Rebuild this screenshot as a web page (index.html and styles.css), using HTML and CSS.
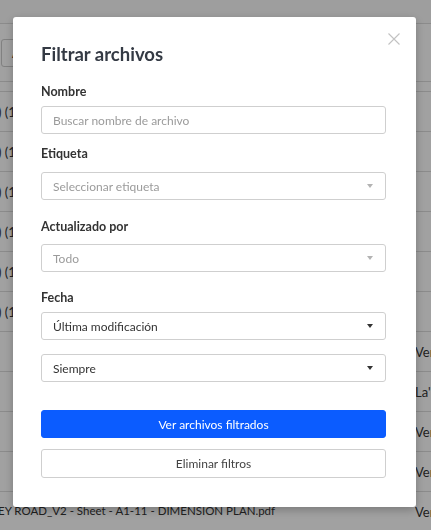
FILE: index.html
```html
<!DOCTYPE html>
<html lang="es">
<head>
<meta charset="utf-8">
<title>Filtrar archivos</title>
<link rel="stylesheet" href="styles.css">
</head>
<body>
<div class="page">
  <div class="topbar"></div>
  <div class="toolbar"><button class="tool-btn">A</button></div>
  <div class="thead"></div>
  <div class="row"><span class="name">) (1).pdf</span></div>
  <div class="row"><span class="name">) (1).pdf</span></div>
  <div class="row"><span class="name">) (1).pdf</span></div>
  <div class="row"><span class="name">) (1).pdf</span></div>
  <div class="row"><span class="name">) (1).pdf</span></div>
  <div class="row"><span class="name">) (1).pdf</span></div>
  <div class="row"><span class="name"></span><span class="who">Ver</span></div>
  <div class="row"><span class="name"></span><span class="who">La'D</span></div>
  <div class="row"><span class="name"></span><span class="who">Ver</span></div>
  <div class="row"><span class="name"></span><span class="who">Ver</span></div>
  <div class="row"><span class="name last">EY ROAD_V2 - Sheet - A1-11 - DIMENSION PLAN.pdf</span><span class="who">Ver</span></div>
</div>

<div class="overlay">
  <div class="modal">
    <button class="close" aria-label="Cerrar">
      <svg width="12" height="12" viewBox="0 0 12 12"><path d="M0.5 0.5L11.5 11.5M11.5 0.5L0.5 11.5" stroke="#c2c2c2" stroke-width="1.1" fill="none"/></svg>
    </button>
    <h2 class="title">Filtrar archivos</h2>

    <div class="field f1">
      <label class="label">Nombre</label>
      <div class="control placeholder">Buscar nombre de archivo</div>
    </div>

    <div class="field f2">
      <label class="label">Etiqueta</label>
      <div class="control placeholder select">Seleccionar etiqueta<span class="caret light"></span></div>
    </div>

    <div class="field f3">
      <label class="label">Actualizado por</label>
      <div class="control placeholder select">Todo<span class="caret light"></span></div>
    </div>

    <div class="field f4">
      <label class="label">Fecha</label>
      <div class="control select">Última modificación<span class="caret"></span></div>
      <div class="control select second">Siempre<span class="caret"></span></div>
    </div>

    <div class="actions">
      <button class="btn primary">Ver archivos filtrados</button>
      <button class="btn secondary">Eliminar filtros</button>
    </div>
  </div>
</div>
</body>
</html>
```

FILE: styles.css
```css
* { box-sizing: border-box; }
html, body { margin: 0; padding: 0; }
body {
  width: 431px;
  height: 530px;
  overflow: hidden;
  background: #ffffff;
  font-family: Lato, "Noto Sans", "Liberation Sans", sans-serif;
  color: #333;
}

.page { width: 431px; }
.topbar { height: 24px; background: #fbfbfb; border-bottom: 1px solid #dcdcdc; }
.toolbar { height: 58px; display: flex; align-items: center; border-bottom: 1px solid #dcdcdc; }
.tool-btn {
  margin: 0 0 0 1px;
  width: 60px; height: 28px;
  background: #fff;
  border: 1px solid #ccc;
  border-radius: 3px;
  font: 13px Lato, sans-serif;
  color: #333;
  text-align: left;
  padding-left: 10px;
}
.thead { height: 10px; border-bottom: 1px solid #dcdcdc; }
.row {
  height: 40px;
  border-bottom: 1px solid #dcdcdc;
  display: flex;
  align-items: center;
  justify-content: space-between;
  font-size: 13px;
  color: #333;
  white-space: nowrap;
}
.name { margin-left: -2px; color: #333; }
.name.last { font-size: 11.5px; margin-top: -3px; }
.who { width: 16px; overflow: hidden; color: #333; }

.overlay {
  position: fixed;
  inset: 0;
  background: rgba(0, 0, 0, 0.37);
  padding: 17px 0 0 13px;
}
.modal {
  position: relative;
  width: 403px;
  height: 490px;
  background: #fff;
  border-radius: 3px;
  box-shadow: 0 3px 10px rgba(0, 0, 0, 0.25);
  padding: 25px 30px 30px 28px;
}
.close {
  position: absolute;
  top: 16px; right: 16px;
  width: 12px; height: 12px;
  padding: 0; border: 0; background: none;
  display: block;
}
.close svg { display: block; }

.title {
  margin: 0 0 18px;
  font-size: 18.5px;
  line-height: 24px;
  font-weight: 700;
  color: #343a44;
}
.field { display: flex; flex-direction: column; }
.label {
  display: block;
  font-size: 12.5px;
  line-height: 16px;
  font-weight: 700;
  color: #333;
}
.f1 .label { margin-bottom: 6px; }
.f2 { margin-top: 12px; }
.f2 .label { margin-bottom: 10px; }
.f3 { margin-top: 19px; }
.f3 .label { margin-bottom: 9px; }
.f4 { margin-top: 18px; }
.f4 .label { margin-bottom: 6px; }

.control {
  height: 28px;
  border: 1px solid #cfcfcf;
  border-radius: 3px;
  display: flex;
  align-items: center;
  padding: 0 11px;
  font-size: 12px;
  color: #333;
  background: #fff;
}
.control.placeholder { color: #9b9b9b; }
.select { justify-content: space-between; }
.control.second { margin-top: 14px; }
.caret {
  width: 0; height: 0;
  border-left: 3.5px solid transparent;
  border-right: 3.5px solid transparent;
  border-top: 4px solid #333;
  margin-right: 1px;
}
.caret.light { border-top-color: #b3b3b3; }

.actions { margin-top: 28px; display: flex; flex-direction: column; gap: 11px; }
.btn {
  height: 28px;
  border-radius: 3px;
  font: 12px Lato, "Noto Sans", sans-serif;
  cursor: pointer;
}
.primary { background: #0b5cff; border: 1px solid #0b5cff; color: #fff; }
.secondary { background: #fff; border: 1px solid #cfcfcf; color: #444; height: 29px; }
```
